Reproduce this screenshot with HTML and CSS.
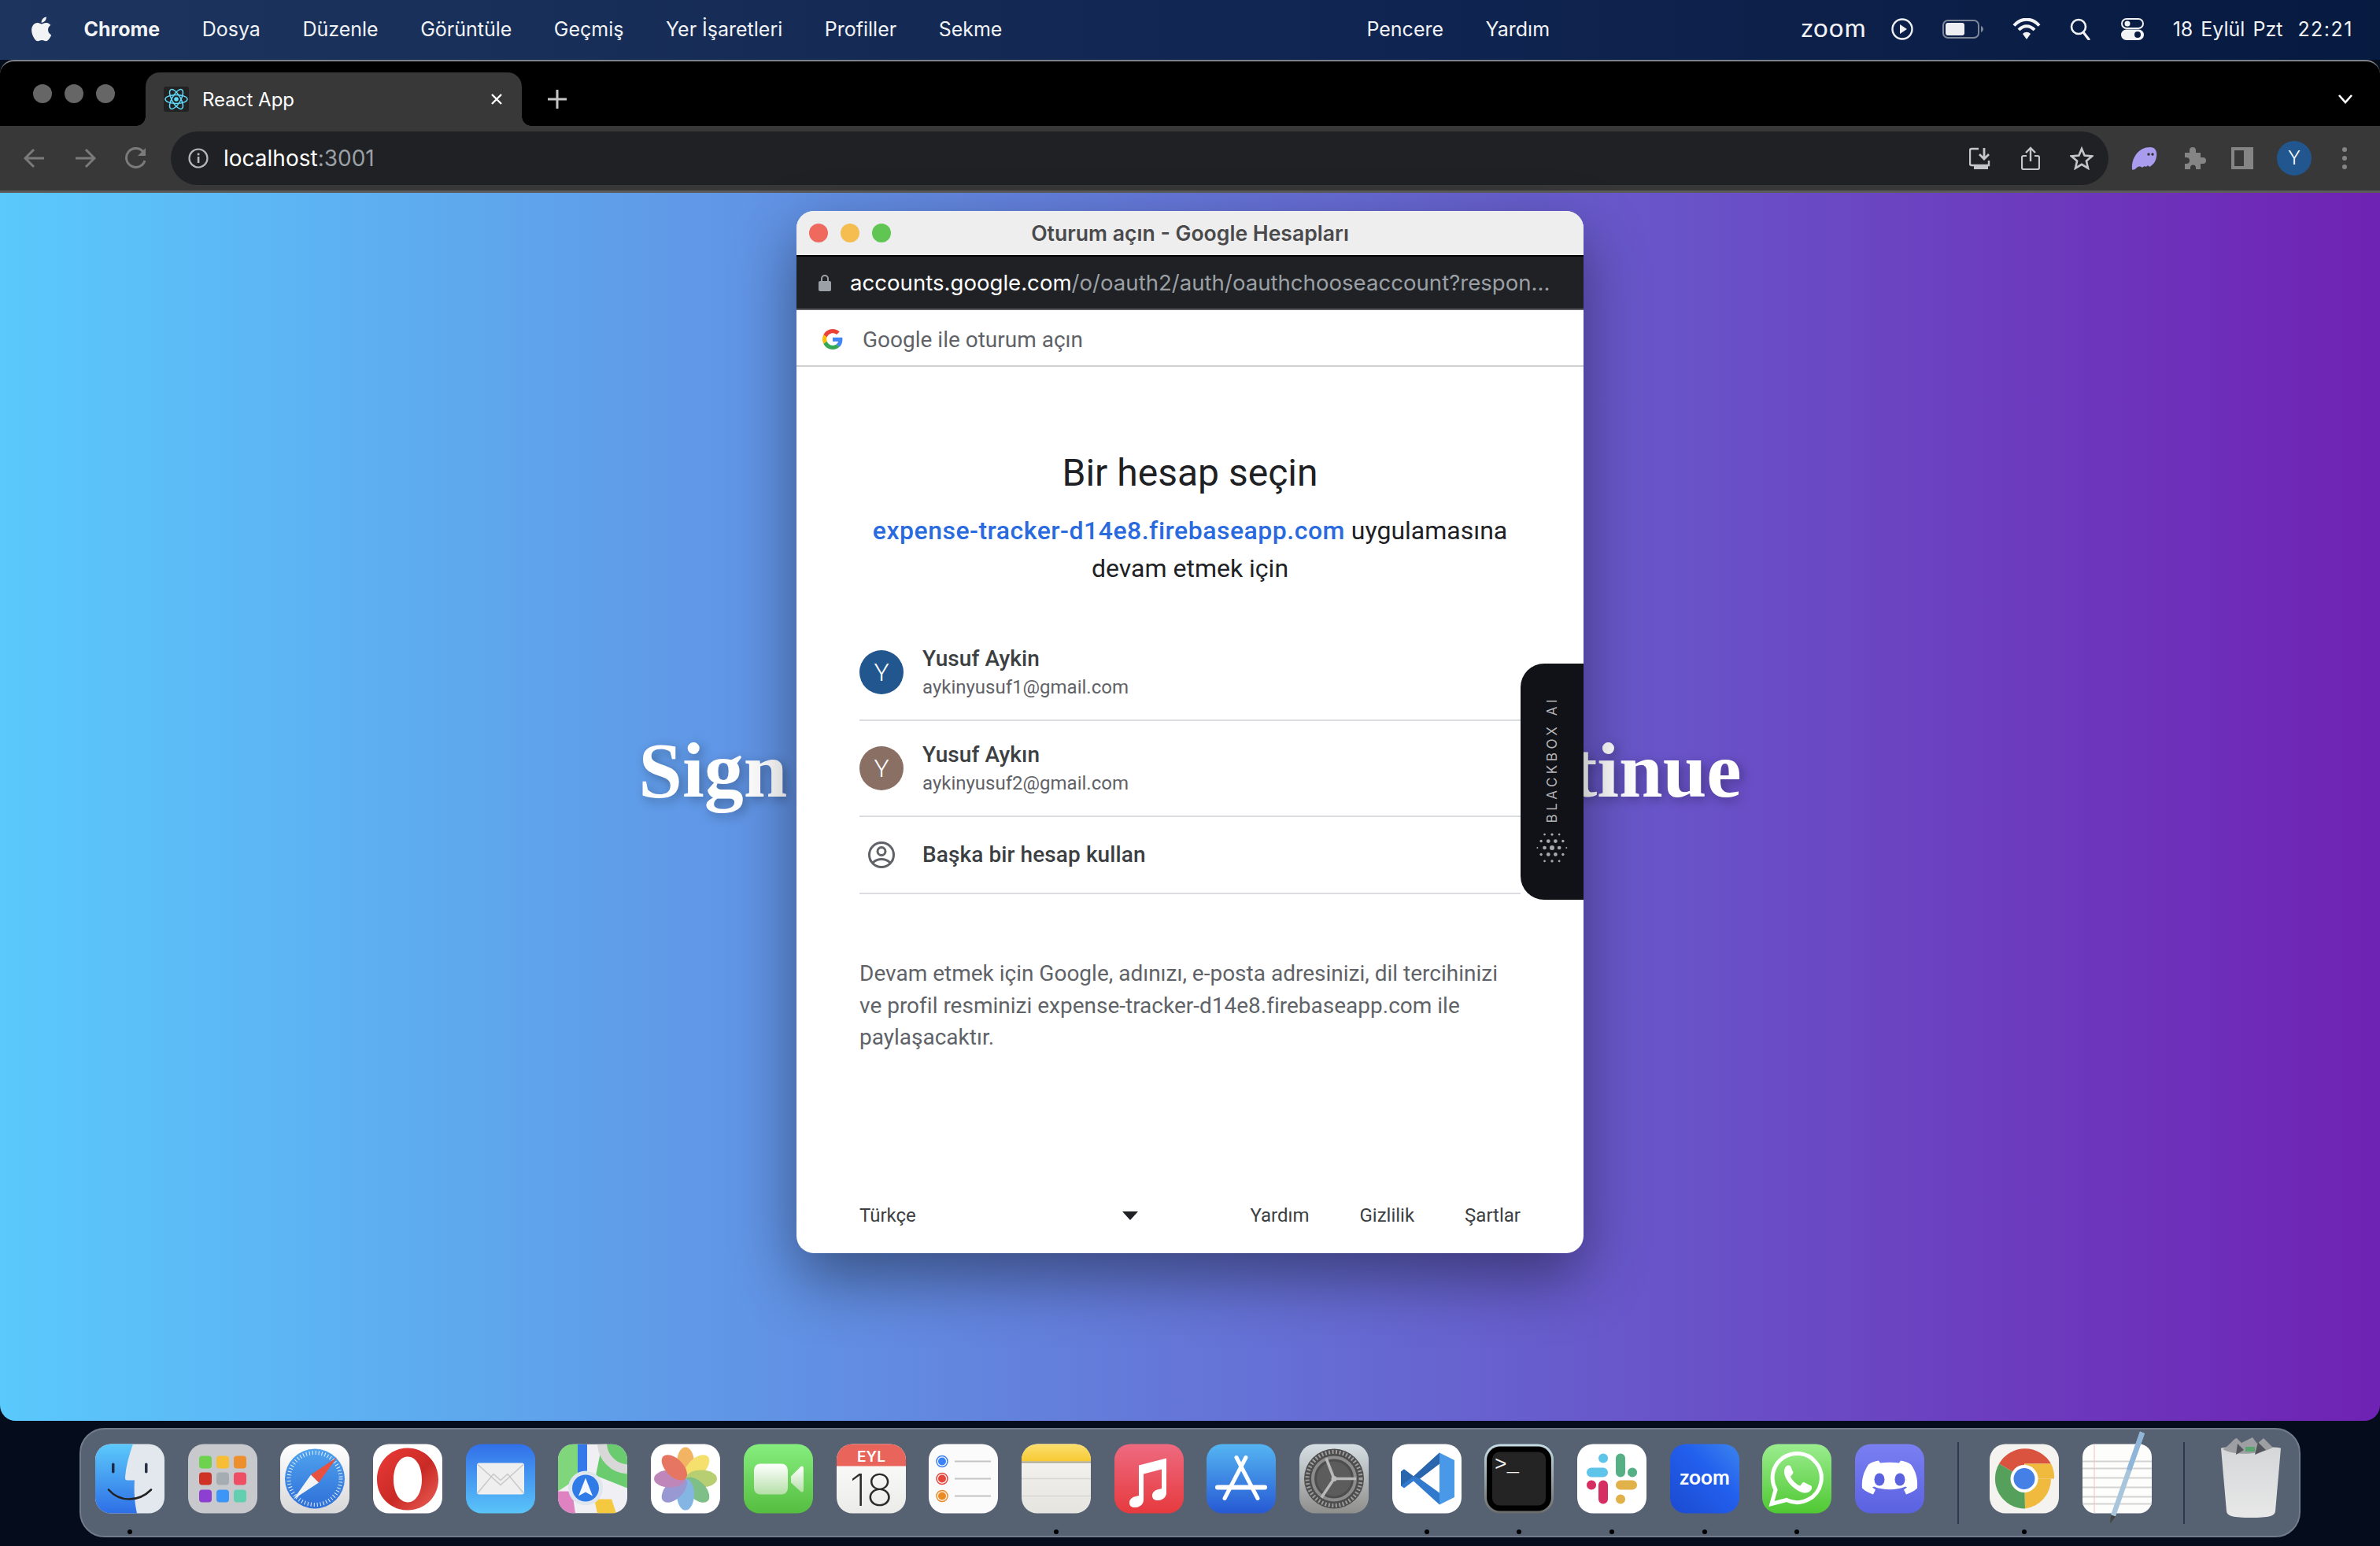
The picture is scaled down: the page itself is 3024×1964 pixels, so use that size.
FILE: index.html
```html
<!DOCTYPE html>
<html lang="tr">
<head>
<meta charset="UTF-8" />
<title>React App</title>
<link rel="stylesheet" href="styles.css">
</head>
<body>

<header class="menubar">
  <div class="menu-left">
    <svg class="apple" viewBox="3 1.5 18 21.5"><path fill="#f2f3f5" d="M17.05 12.54c-.03-2.6 2.12-3.85 2.22-3.91-1.21-1.77-3.09-2.01-3.76-2.04-1.6-.16-3.12.94-3.93.94-.81 0-2.06-.92-3.39-.89-1.74.03-3.35 1.01-4.25 2.57-1.81 3.14-.46 7.8 1.3 10.35.86 1.25 1.89 2.65 3.24 2.6 1.3-.05 1.79-.84 3.36-.84 1.57 0 2.01.84 3.39.82 1.4-.03 2.28-1.27 3.14-2.53.99-1.45 1.4-2.85 1.42-2.93-.03-.01-2.72-1.04-2.74-4.14zM14.47 4.9c.72-.87 1.2-2.08 1.07-3.28-1.03.04-2.28.69-3.02 1.55-.66.77-1.24 2-1.09 3.18 1.15.09 2.33-.59 3.04-1.45z"/></svg>
    <span class="menu-app">Chrome</span>
    <span>Dosya</span>
    <span>Düzenle</span>
    <span>Görüntüle</span>
    <span>Geçmiş</span>
    <span>Yer İşaretleri</span>
    <span>Profiller</span>
    <span>Sekme</span>
    <span class="notch"></span>
    <span>Pencere</span>
    <span>Yardım</span>
  </div>
  <div class="menu-right">
    <span class="menu-zoom">zoom</span>
    <svg class="st" width="28" height="28" viewBox="0 0 28 28"><circle cx="14" cy="14" r="12.5" fill="none" stroke="#eef0f3" stroke-width="2.4"/><path d="M11 8l9 6-9 6z" fill="#eef0f3"/></svg>
    <svg class="st" width="52" height="24" viewBox="0 0 52 24"><rect x="1" y="1" width="45" height="22" rx="6" fill="none" stroke="#7e8798" stroke-width="2"/><rect x="4" y="4" width="24" height="16" rx="3" fill="#eceef1"/><path d="M49 8c2 1 3 2.500 3 4s-1 3-3 4z" fill="#7e8798"/></svg>
    <svg class="st" width="36" height="28" viewBox="0 0 36 28"><path d="M2 9.500C11-1 25-1 34 9.500" fill="none" stroke="#f2f3f5" stroke-width="4"/><path d="M8 15c6-6.500 14-6.500 20 0" fill="none" stroke="#f2f3f5" stroke-width="4"/><path d="M13 20c3-3 7-3 10 0l-5 7z" fill="#f2f3f5"/></svg>
    <svg class="st st-search" width="26" height="28" viewBox="0 0 26 28"><circle cx="11" cy="11" r="9" fill="none" stroke="#f2f3f5" stroke-width="2.600"/><path d="M17 18l7 9" stroke="#f2f3f5" stroke-width="3.200" stroke-linecap="round"/></svg>
    <svg class="st" width="29" height="28" viewBox="0 0 29 28"><rect x="1" y="1" width="27" height="12" rx="6" fill="none" stroke="#f2f3f5" stroke-width="2"/><circle cx="8" cy="7" r="3.500" fill="#f2f3f5"/><rect y="14.500" width="29" height="13.500" rx="6.700" fill="#f2f3f5"/><circle cx="21" cy="21" r="4" fill="#0a1c40"/></svg>
    <span class="menu-date">18 Eylül Pzt</span>
    <span class="menu-time">22:21</span>
  </div>
</header>

<div class="browser">
  <div class="tabstrip">
    <div class="lights"><i></i><i></i><i></i></div>
    <div class="tab">
      <svg class="favicon" viewBox="0 0 32 32"><rect width="32" height="32" rx="3" fill="#222"/><g fill="none" stroke="#61dafb" stroke-width="1.500"><ellipse cx="16" cy="16" rx="14" ry="5.500"/><ellipse cx="16" cy="16" rx="14" ry="5.500" transform="rotate(60 16 16)"/><ellipse cx="16" cy="16" rx="14" ry="5.500" transform="rotate(120 16 16)"/></g><circle cx="16" cy="16" r="2.800" fill="#61dafb"/></svg>
      <span class="tab-title">React App</span>
      <svg class="tab-close" width="16" height="16" viewBox="0 0 16 16"><path d="M2 2l12 12M14 2L2 14" stroke="#fff" stroke-width="2.400"/></svg>
    </div>
    <svg class="newtab" width="26" height="26" viewBox="0 0 26 26"><path d="M13 1v24M1 13h24" stroke="#c6c6c6" stroke-width="3"/></svg>
    <svg class="tabmenu" width="20" height="12" viewBox="0 0 20 12"><path d="M2 1l8 9 8-9" fill="none" stroke="#fff" stroke-width="2.600"/></svg>
  </div>
  <div class="toolbar">
    <svg class="nav" width="28" height="26" viewBox="0 0 28 26"><path d="M26 13H3M13 2L2 13l11 11" fill="none" stroke="#7b7b7b" stroke-width="3"/></svg>
    <svg class="nav" width="28" height="26" viewBox="0 0 28 26"><path d="M2 13h23M15 2l11 11-11 11" fill="none" stroke="#7b7b7b" stroke-width="3"/></svg>
    <svg class="nav" width="30" height="28" viewBox="0 0 30 28"><path d="M26 17a12 12 0 1 1-2-11" fill="none" stroke="#7b7b7b" stroke-width="3"/><path d="M27 1v10H17z" fill="#7b7b7b"/></svg>
    <div class="omnibox">
      <svg width="26" height="26" viewBox="0 0 26 26"><circle cx="13" cy="13" r="11.500" fill="none" stroke="#b5b7ba" stroke-width="2.200"/><rect x="11.800" y="11" width="2.600" height="8" fill="#b5b7ba"/><rect x="11.800" y="6.500" width="2.600" height="2.800" fill="#b5b7ba"/></svg>
      <span class="omni-url">localhost<span class="dim">:3001</span></span>
      <div class="omni-actions">
        <svg width="28" height="28" viewBox="0 0 28 28"><path d="M12 2H3a2 2 0 0 0-2 2v17a2 2 0 0 0 2 2h22v-6" fill="none" stroke="#c4c6c8" stroke-width="2.400"/><path d="M19 1v13M13 9l6 6 6-6" fill="none" stroke="#c4c6c8" stroke-width="2.800"/><rect x="6" y="24" width="18" height="4" fill="#c4c6c8"/></svg>
        <svg width="24" height="30" viewBox="0 0 24 30"><path d="M7 12H3a2 2 0 0 0-2 2v13a2 2 0 0 0 2 2h18a2 2 0 0 0 2-2V14a2 2 0 0 0-2-2h-4" fill="none" stroke="#c4c6c8" stroke-width="2.200"/><path d="M12 19V2M6 8l6-6 6 6" fill="none" stroke="#c4c6c8" stroke-width="2.400"/></svg>
        <svg width="30" height="30" viewBox="0 0 30 30"><path d="M15 3l3.600 8.600 9.400.8-7.100 6.100 2.100 9.200-8-4.900-8 4.900 2.100-9.200L2 12.400l9.400-.8z" fill="none" stroke="#c4c6c8" stroke-width="2.600"/></svg>
      </div>
    </div>
    <div class="extensions">
      <svg width="33" height="30" viewBox="0 0 33 30"><path d="M1 29C0 16 8 1 24 1c7 0 9 6 8 12-1 7-5 11-9 13-1-2-3-2-4 0-2-1-3-1-5 1-2-2-5-2-7 0-2 2-5 4-6 2z" fill="#a99bee"/><circle cx="22" cy="10" r="1.700" fill="#333"/><circle cx="27" cy="10" r="1.700" fill="#333"/></svg>
      <svg width="30" height="30" viewBox="0 0 30 30"><path d="M3 8h6V5a4 4 0 0 1 8 0v3h6v6h3a4 4 0 0 1 0 8h-3v7h-6v-2a3.500 3.500 0 0 0-7 0v2H3v-7h2a4 4 0 0 0 0-8H3z" fill="#858585"/></svg>
      <svg width="28" height="28" viewBox="0 0 28 28"><path d="M0 0h28v28H0zM4 4v20h12V4z" fill="#858585" fill-rule="evenodd"/></svg>
      <span class="profile">Y</span>
      <svg width="8" height="30" viewBox="0 0 8 30"><circle cx="4" cy="4" r="3" fill="#858585"/><circle cx="4" cy="15" r="3" fill="#858585"/><circle cx="4" cy="26" r="3" fill="#858585"/></svg>
    </div>
  </div>
</div>

<main class="page">
  <h1 class="page-title">Sign in with Google to continue</h1>

  <section class="popup">
    <div class="popup-bar">
      <div class="popup-lights"><i class="red"></i><i class="yellow"></i><i class="green"></i></div>
      <span>Oturum açın - Google Hesapları</span>
    </div>
    <div class="popup-url">
      <svg width="16" height="21" viewBox="0 0 16 21"><path d="M4 9V5a4 4 0 0 1 8 0v4" fill="none" stroke="#9aa0a6" stroke-width="2"/><rect y="8" width="16" height="13" rx="2" fill="#9aa0a6"/></svg>
      <span>accounts.google.com<span class="dim">/o/oauth2/auth/oauthchooseaccount?respon...</span></span>
    </div>
    <div class="signin-head">
      <svg width="26" height="26" viewBox="0 0 48 48"><path fill="#EA4335" d="M24 9.500c3.540 0 6.710 1.220 9.210 3.600l6.850-6.850C35.900 2.380 30.470 0 24 0 14.620 0 6.510 5.380 2.560 13.220l7.980 6.190C12.430 13.720 17.740 9.500 24 9.500z"/><path fill="#4285F4" d="M46.980 24.550c0-1.570-.15-3.090-.38-4.550H24v9.020h12.940c-.58 2.960-2.260 5.480-4.780 7.180l7.730 6c4.510-4.180 7.090-10.360 7.090-17.650z"/><path fill="#FBBC05" d="M10.530 28.590c-.48-1.450-.76-2.990-.76-4.590s.27-3.140.76-4.590l-7.980-6.190C.92 16.460 0 20.120 0 24c0 3.880.92 7.540 2.560 10.780l7.970-6.190z"/><path fill="#34A853" d="M24 48c6.480 0 11.930-2.130 15.890-5.810l-7.730-6c-2.150 1.450-4.920 2.300-8.160 2.300-6.260 0-11.570-4.220-13.470-9.910l-7.980 6.190C6.510 42.620 14.620 48 24 48z"/></svg>
      <span>Google ile oturum açın</span>
    </div>
    <div class="signin-body">
      <h2>Bir hesap seçin</h2>
      <p class="signin-sub"><a>expense-tracker-d14e8.firebaseapp.com</a> uygulamasına<br>devam etmek için</p>
      <ul class="accounts">
        <li class="account">
          <span class="avatar blue">Y</span>
          <div class="acc-text"><div class="acc-name">Yusuf Aykin</div><div class="acc-mail">aykinyusuf1@gmail.com</div></div>
        </li>
        <li class="account">
          <span class="avatar brown">Y</span>
          <div class="acc-text"><div class="acc-name">Yusuf Aykın</div><div class="acc-mail">aykinyusuf2@gmail.com</div></div>
        </li>
        <li class="account other">
          <svg class="other-icon" width="36" height="36" viewBox="0 0 36 36"><circle cx="18" cy="18" r="15.500" fill="none" stroke="#5f6368" stroke-width="3"/><circle cx="18" cy="13.500" r="5" fill="none" stroke="#5f6368" stroke-width="3"/><path d="M7 28c6-6 16-6 22 0" fill="none" stroke="#5f6368" stroke-width="3"/></svg>
          <div class="acc-name">Başka bir hesap kullan</div>
        </li>
      </ul>
      <p class="signin-note">Devam etmek için Google, adınızı, e-posta adresinizi, dil tercihinizi<br>ve profil resminizi expense-tracker-d14e8.firebaseapp.com ile<br>paylaşacaktır.</p>
      <footer class="signin-foot">
        <div class="lang"><span>Türkçe</span><i class="caret"></i></div>
        <div class="foot-links"><span>Yardım</span><span>Gizlilik</span><span>Şartlar</span></div>
      </footer>
    </div>

    <aside class="blackbox">
      <span class="blackbox-label">BLACKBOX AI</span>
      <svg width="44" height="44" viewBox="0 0 130 130" fill="#a9a9ad">
        <circle cx="37" cy="15" r="4"/><circle cx="65" cy="15" r="5"/><circle cx="92" cy="15" r="4"/>
        <circle cx="24" cy="40" r="5"/><circle cx="51" cy="40" r="7"/><circle cx="78" cy="40" r="7"/><circle cx="106" cy="40" r="5"/>
        <circle cx="10" cy="65" r="3"/><circle cx="37" cy="65" r="7"/><circle cx="65" cy="65" r="9"/><circle cx="92" cy="65" r="7"/><circle cx="119" cy="65" r="3"/>
        <circle cx="24" cy="90" r="5"/><circle cx="51" cy="90" r="7"/><circle cx="78" cy="90" r="7"/><circle cx="106" cy="90" r="5"/>
        <circle cx="37" cy="115" r="4"/><circle cx="65" cy="115" r="5"/><circle cx="92" cy="115" r="4"/>
      </svg>
    </aside>
  </section>
</main>

<nav class="dock">
  <div class="app on"><svg viewBox="0 0 88 88"><defs><linearGradient id="fi" x1="0" y1="0" x2="0" y2="1"><stop offset="0" stop-color="#5cc9fb"/><stop offset="1" stop-color="#2e6fe6"/></linearGradient></defs><rect width="88" height="88" rx="20" fill="#e3e7ee"/><path d="M20 0h28c-5 14-9 28-10 42-.3 3 .8 4 3 4h9c-1 14 0 29 3 42H20A20 20 0 0 1 0 68V20A20 20 0 0 1 20 0z" fill="url(#fi)"/><rect x="21" y="24" width="3.500" height="13" rx="1.700" fill="#1c2b4a"/><rect x="63" y="24" width="3.500" height="13" rx="1.700" fill="#2a3346"/><path d="M17 58c14 16 38 16 54 0" fill="none" stroke="#222" stroke-width="2.600" stroke-linecap="round"/></svg></div>
  <div class="app"><svg viewBox="0 0 88 88"><rect width="88" height="88" rx="20" fill="#c7c9cd"/><g><rect x="14" y="15" width="16" height="16" rx="4" fill="#6fd24f"/><rect x="36" y="15" width="16" height="16" rx="4" fill="#f7bd35"/><rect x="58" y="15" width="16" height="16" rx="4" fill="#ee8f2d"/><rect x="14" y="36" width="16" height="16" rx="4" fill="#cf3325"/><rect x="36" y="36" width="16" height="16" rx="4" fill="#a5adb2"/><rect x="58" y="36" width="16" height="16" rx="4" fill="#ee4f64"/><rect x="14" y="58" width="16" height="16" rx="4" fill="#8c3fd0"/><rect x="36" y="58" width="16" height="16" rx="4" fill="#3d95f7"/><rect x="58" y="58" width="16" height="16" rx="4" fill="#63cfb0"/></g></svg></div>
  <div class="app"><svg viewBox="0 0 88 88"><defs><linearGradient id="sa" x1="0" y1="0" x2="0" y2="1"><stop offset="0" stop-color="#4fa3ee"/><stop offset="1" stop-color="#2f6fd8"/></linearGradient><linearGradient id="sb" x1="0" y1="0" x2="0" y2="1"><stop offset="0" stop-color="#fff"/><stop offset="1" stop-color="#d8d8d8"/></linearGradient></defs><rect width="88" height="88" rx="20" fill="url(#sb)"/><circle cx="44" cy="44" r="38" fill="url(#sa)"/><circle cx="44" cy="44" r="33" fill="none" stroke="#e6f0fb" stroke-width="5" stroke-dasharray="1 3"/><path d="M72 17L39 39l10 10z" fill="#e8503f"/><path d="M17 70l22-31 10 10z" fill="#f4f4f4"/></svg></div>
  <div class="app"><svg viewBox="0 0 88 88"><defs><linearGradient id="op" x1="0" y1="0" x2="1" y2="1"><stop offset="0" stop-color="#ec3b39"/><stop offset=".55" stop-color="#c92a25"/><stop offset="1" stop-color="#ec6259"/></linearGradient></defs><rect width="88" height="88" rx="20" fill="#fff"/><path d="M44 5c21 0 39 17 39 40S65 84 44 84 5 68 5 45 23 5 44 5zm0 11c-11 0-18 13-18 29s7 29 18 29 18-13 18-29-7-29-18-29z" fill="url(#op)" fill-rule="evenodd"/></svg></div>
  <div class="app"><svg viewBox="0 0 88 88"><defs><linearGradient id="ma" x1="0" y1="0" x2="0" y2="1"><stop offset="0" stop-color="#3270ea"/><stop offset="1" stop-color="#5ac4f8"/></linearGradient></defs><rect width="88" height="88" rx="20" fill="url(#ma)"/><rect x="14" y="24" width="60" height="40" rx="3" fill="#efefef"/><path d="M15 62l20-24 9 8 9-8 20 24M15 26l29 26 29-26" fill="none" stroke="#c8c8c8" stroke-width="1.500"/></svg></div>
  <div class="app"><svg viewBox="0 0 88 88"><defs><clipPath id="mc"><rect width="88" height="88" rx="20"/></clipPath></defs><g clip-path="url(#mc)"><rect width="88" height="88" fill="#f0f0f4"/><path d="M0 0h30v40L0 60z" fill="#7fd67b"/><path d="M56 0h32v56L48 40z" fill="#6acb6f"/><path d="M0 60l18 0 4 28H0z" fill="#df82c2"/><path d="M46 70h22l6 18H50z" fill="#f5c93f"/><rect x="25" y="0" width="12" height="40" fill="#3478ea"/><path d="M56 0a34 34 0 0 0 32 32" fill="none" stroke="#d8d8d8" stroke-width="12"/></g><circle cx="35" cy="56" r="22" fill="#dfe6ee"/><circle cx="35" cy="56" r="17" fill="#2f7be8"/><path d="M35 43l9 23-9-5-9 5z" fill="#f4f8ff"/></svg></div>
  <div class="app"><svg viewBox="0 0 88 88"><rect width="88" height="88" rx="20" fill="#fff"/><g opacity=".8"><ellipse cx="44" cy="24" rx="11" ry="20" fill="#f0a13c"/><ellipse cx="44" cy="24" rx="11" ry="20" fill="#f3d94a" transform="rotate(45 44 44)"/><ellipse cx="44" cy="24" rx="11" ry="20" fill="#a6c34f" transform="rotate(90 44 44)"/><ellipse cx="44" cy="24" rx="11" ry="20" fill="#5fae6a" transform="rotate(135 44 44)"/><ellipse cx="44" cy="24" rx="11" ry="20" fill="#65a5dd" transform="rotate(180 44 44)"/><ellipse cx="44" cy="24" rx="11" ry="20" fill="#7f7fc9" transform="rotate(225 44 44)"/><ellipse cx="44" cy="24" rx="11" ry="20" fill="#b06aa8" transform="rotate(270 44 44)"/><ellipse cx="44" cy="24" rx="11" ry="20" fill="#e0533a" transform="rotate(315 44 44)"/></g></svg></div>
  <div class="app"><svg viewBox="0 0 88 88"><defs><linearGradient id="ft" x1="0" y1="0" x2="0" y2="1"><stop offset="0" stop-color="#86ee7e"/><stop offset="1" stop-color="#55bd3f"/></linearGradient><linearGradient id="fw" x1="0" y1="0" x2="0" y2="1"><stop offset="0" stop-color="#fff"/><stop offset="1" stop-color="#b5dfa8"/></linearGradient></defs><rect width="88" height="88" rx="20" fill="url(#ft)"/><rect x="13" y="25" width="43" height="39" rx="8" fill="url(#fw)"/><path d="M60 41l12-12c2-2 4-1 4 2v27c0 3-2 4-4 2L60 49z" fill="url(#fw)"/></svg></div>
  <div class="app"><svg viewBox="0 0 88 88"><defs><linearGradient id="cal" x1="0" y1="0" x2="0" y2="1"><stop offset="0" stop-color="#fff"/><stop offset="1" stop-color="#ebebe8"/></linearGradient></defs><rect width="88" height="88" rx="20" fill="url(#cal)"/><path d="M20 0h48a20 20 0 0 1 20 20v8H0v-8A20 20 0 0 1 20 0z" fill="#e9655c"/><text class="cal-month" x="44" y="22" text-anchor="middle">EYL</text><text class="cal-day" x="44" y="78" text-anchor="middle">18</text></svg></div>
  <div class="app"><svg viewBox="0 0 88 88"><rect width="88" height="88" rx="20" fill="#fbfbfb"/><g fill="none" stroke-width="1.500"><circle cx="17" cy="22" r="7" stroke="#3b82f6"/><circle cx="17" cy="44" r="7" stroke="#e6473c"/><circle cx="17" cy="66" r="7" stroke="#e98a25"/></g><circle cx="17" cy="22" r="5" fill="#3b82f6"/><circle cx="17" cy="44" r="5" fill="#e6473c"/><circle cx="17" cy="66" r="5" fill="#e98a25"/><path d="M33 22h46M33 44h46M33 66h46" stroke="#c4c4c4" stroke-width="2"/></svg></div>
  <div class="app on"><svg viewBox="0 0 88 88"><defs><linearGradient id="no" x1="0" y1="0" x2="0" y2="1"><stop offset="0" stop-color="#f6f5f2"/><stop offset="1" stop-color="#e5e4df"/></linearGradient><linearGradient id="ny" x1="0" y1="0" x2="0" y2="1"><stop offset="0" stop-color="#fbdf6f"/><stop offset="1" stop-color="#f7c933"/></linearGradient></defs><rect width="88" height="88" rx="20" fill="url(#no)"/><path d="M20 0h48a20 20 0 0 1 20 20v2H0v-2A20 20 0 0 1 20 0z" fill="url(#ny)"/><rect y="22" width="88" height="2" fill="#a9a48e"/><path d="M0 44h88M0 66h88" stroke="#d8d7d2" stroke-width="1.500"/></svg></div>
  <div class="app"><svg viewBox="0 0 88 88"><defs><linearGradient id="mu" x1="0" y1="0" x2="0" y2="1"><stop offset="0" stop-color="#ee6a80"/><stop offset="1" stop-color="#e63a3e"/></linearGradient></defs><rect width="88" height="88" rx="20" fill="url(#mu)"/><path d="M31 27l35-9v44c0 5-4 9-10 9.500-5 .5-8-2-8-6s3-7 8-8l4-1V32l-23 6v33c0 5-4 9-10 9.500-5 .5-8-2-8-6s3-7 8-8l4-1z" fill="#fff"/></svg></div>
  <div class="app"><svg viewBox="0 0 88 88"><defs><linearGradient id="as" x1="0" y1="0" x2="0" y2="1"><stop offset="0" stop-color="#55b5f2"/><stop offset="1" stop-color="#2659d4"/></linearGradient></defs><rect width="88" height="88" rx="20" fill="url(#as)"/><g stroke="#fff" stroke-linecap="round" fill="none"><path d="M50 17L23 69" stroke-width="5"/><path d="M38 17l27 52" stroke-width="5"/><path d="M14 55h60" stroke-width="6"/></g></svg></div>
  <div class="app"><svg viewBox="0 0 88 88"><defs><linearGradient id="sp" x1="0" y1="0" x2="0" y2="1"><stop offset="0" stop-color="#d6dfe4"/><stop offset="1" stop-color="#8f8f8c"/></linearGradient></defs><rect width="88" height="88" rx="20" fill="url(#sp)"/><circle cx="44" cy="44" r="38" fill="#4d4d4d"/><circle cx="44" cy="44" r="34" fill="none" stroke="#9d9d9d" stroke-width="5" stroke-dasharray="2 2.500"/><circle cx="44" cy="44" r="27" fill="none" stroke="#8c8c8c" stroke-width="4"/><circle cx="44" cy="44" r="22" fill="#5c5c5c"/><path d="M44 44L34 18M44 44l28 0M44 44L28 68" stroke="#b9b9b9" stroke-width="3.500"/><circle cx="44" cy="44" r="3.500" fill="#bcbcbc"/></svg></div>
  <div class="app on"><svg viewBox="0 0 88 88"><rect width="88" height="88" rx="20" fill="#fff"/><path d="M60 11l19 9.500v47L60 77z" fill="#4a98e8"/><path d="M60 11L27 41l-12-9-4 3v18l4 3 12-9 33 30V62L35 44l25-19z" fill="#327ace"/><path d="M60 11L27 41l8 3 25-19z" fill="#2a66ad"/><path d="M11 35l4-3 12 9-16 12z" fill="#2a66ad"/></svg></div>
  <div class="app on"><svg viewBox="0 0 88 88"><defs><linearGradient id="te" x1="0" y1="0" x2="0" y2="1"><stop offset="0" stop-color="#c5dde5"/><stop offset="1" stop-color="#6c6c6c"/></linearGradient></defs><rect width="88" height="88" rx="20" fill="url(#te)"/><rect x="3" y="3" width="82" height="82" rx="17" fill="#000"/><rect x="10" y="10" width="68" height="68" rx="9" fill="#242424"/><text class="term" x="13" y="33">&gt;_</text></svg></div>
  <div class="app on"><svg viewBox="0 0 88 88"><rect width="88" height="88" rx="20" fill="#fff"/><g stroke-linecap="round" stroke-width="12" fill="none"><path d="M33 18h.1M33 36H18" stroke="#5ec4ea"/><path d="M55 18v18M70 36h.1" stroke="#55b086"/><path d="M55 52h15M55 70h.1" stroke="#e1b14a"/><path d="M33 52v18M18 52h.1" stroke="#d62e63"/></g></svg></div>
  <div class="app on"><svg viewBox="0 0 88 88"><defs><linearGradient id="zo" x1="1" y1="0" x2="0" y2="1"><stop offset="0" stop-color="#3c84ee"/><stop offset=".4" stop-color="#2260ee"/><stop offset="1" stop-color="#1c4ad0"/></linearGradient></defs><rect width="88" height="88" rx="20" fill="url(#zo)"/><text class="zoom-app" x="44" y="51" text-anchor="middle">zoom</text></svg></div>
  <div class="app on"><svg viewBox="0 0 88 88"><defs><linearGradient id="wa" x1="0" y1="0" x2="0" y2="1"><stop offset="0" stop-color="#9bed8f"/><stop offset="1" stop-color="#4fc832"/></linearGradient></defs><rect width="88" height="88" rx="20" fill="url(#wa)"/><path d="M44 12a31 31 0 0 0-27 46l-5 18 19-5a31 31 0 1 0 13-59z" fill="none" stroke="#fff" stroke-width="5"/><path d="M33 27c-2 0-5 3-5 8 0 12 16 27 27 27 5 0 8-4 8-6 0-1 0-3-1-3l-8-4c-2-1-3 0-4 2l-2 2c-4-1-11-8-12-12l2-2c1-1 2-3 1-4l-3-7c-1-1-2-1-3-1z" fill="#fff"/></svg></div>
  <div class="app"><svg viewBox="0 0 88 88"><defs><linearGradient id="di" x1="0" y1="0" x2="0" y2="1"><stop offset="0" stop-color="#7a7ff2"/><stop offset="1" stop-color="#5b62e0"/></linearGradient></defs><rect width="88" height="88" rx="20" fill="url(#di)"/><path d="M30 21c-5 1-9 2-13 5-6 9-9 19-8 30 4 4 9 6 14 8l3-6-4-3 2-1c12 5 28 5 40 0l2 1-4 3 3 6c5-2 10-4 14-8 1-12-2-22-8-30-4-3-8-4-13-5l-2 3c-8-1-16-1-24 0z" fill="#fff"/><ellipse cx="31" cy="45" rx="6.500" ry="8" fill="#5b62e0"/><ellipse cx="57" cy="45" rx="6.500" ry="8" fill="#5b62e0"/></svg></div>
  <div class="dock-sep first"></div>
  <div class="app on after-sep"><svg viewBox="0 0 88 88"><rect width="88" height="88" rx="20" fill="#f4f3f0"/><path d="M44 44L12 25A38 38 0 0 1 78 25H44z" fill="#d9533e"/><path d="M44 44h34a38 38 0 0 1-33 38z" fill="#f0ba3e"/><path d="M44 44l1 38A38 38 0 0 1 12 25z" fill="#55a05a"/><path d="M44 25h34a38 38 0 0 1 4 19H62z" fill="#f0ba3e"/><circle cx="44" cy="44" r="17.500" fill="#fff"/><circle cx="44" cy="44" r="13.500" fill="#4580e6"/></svg></div>
  <div class="app"><svg viewBox="0 0 88 88"><rect width="88" height="88" rx="16" fill="#fdfdfb"/><path d="M0 22h88M0 31h88M0 43h88M0 55h88M0 67h88M0 76h88" stroke="#d3d3d3" stroke-width="1.800"/><path d="M15 0v88" stroke="#f2c2c2" stroke-width="1"/><path d="M36 90L73-16l6 2.500L42 92z" fill="#a9c5dc"/><path d="M56 32L73-16l6 2.500L62 34z" fill="#8fb6d8"/><path d="M36 90l6 2-7 9z" fill="#444"/></svg></div>
  <div class="dock-sep"></div>
  <div class="trash"><svg width="80" height="102" viewBox="0 0 78 102"><defs><linearGradient id="tr" x1="0" y1="0" x2="0" y2="1"><stop offset="0" stop-color="#d4d6d8"/><stop offset="1" stop-color="#e8e8e8"/></linearGradient></defs><path d="M1 14c0-3 76-3 76 0l-7 80c-1 6-8 8-31 8s-30-2-31-8z" fill="url(#tr)"/><path d="M3 15c10-5 14-14 18-14l6 6 14-7 6 8 8-7 12 12c-20 10-50 10-64 2z" fill="#9d9fa2"/><path d="M22 8l8 8-10 6zM48 6l10 10-14 6z" fill="#51545a"/><rect x="32" y="12" width="12" height="6" fill="#58a56f"/></svg></div>
</nav>

</body>
</html>
```

FILE: styles.css
```css
* {
  box-sizing: border-box;
}

html, body {
  margin: 0;
  width: 3024px;
  height: 1964px;
  overflow: hidden;
}

body {
  display: flex;
  flex-direction: column;
  background: #050d1c;
  font-family: Inter, "Noto Sans", sans-serif;
}

/* macOS menu bar */
.menubar {
  height: 76px;
  flex: none;
  display: flex;
  align-items: center;
  justify-content: space-between;
  padding: 0 34px 2px 40px;
  background: linear-gradient(90deg, #1d355e, #0f2450 60%, #071a40);
  color: #f2f3f5;
  font-size: 25px;
}

.menu-left {
  display: flex;
  align-items: center;
  gap: 53.500px;
}

.apple {
  width: 27px;
  height: 33px;
  margin-right: -14px;
}

.menu-app {
  font-weight: 700;
}

.notch {
  width: 356px;
}

.menu-right {
  display: flex;
  align-items: center;
  gap: 37px;
}

.st-search {
  margin-right: 2px;
}

.menu-zoom {
  font-family: Lato, sans-serif;
  font-size: 33px;
  font-weight: 400;
  letter-spacing: 1px;
  line-height: 30px;
  margin: 0 -6px 6px 0;
}

.menu-date {
  word-spacing: 3px;
}

.menu-time {
  margin-left: -18px;
  letter-spacing: 1.500px;
}

/* browser chrome */
.browser {
  flex: none;
}

.tabstrip {
  height: 84px;
  display: flex;
  align-items: flex-end;
  background: #000;
  border-top: 2px solid #7d8188;
  border-radius: 18px 18px 0 0;
  padding-right: 34px;
}

.lights {
  width: 185px;
  height: 66px;
  flex: none;
  display: flex;
  gap: 16px;
  padding: 13px 0 0 42px;
}

.lights i {
  width: 24px;
  height: 24px;
  border-radius: 50%;
  background: #666;
}

.tab {
  position: relative;
  width: 478px;
  height: 68px;
  display: flex;
  align-items: center;
  padding: 0 24px 0 23px;
  background: #383838;
  border-radius: 18px 18px 0 0;
  color: #fff;
  font-size: 24px;
}

.tab::before,
.tab::after {
  content: "";
  position: absolute;
  bottom: 0;
  width: 12px;
  height: 12px;
}

.tab::before {
  left: -12px;
  background: radial-gradient(circle at 0 0, #000 11.500px, #383838 12px);
}

.tab::after {
  right: -12px;
  background: radial-gradient(circle at 100% 0, #000 11.500px, #383838 12px);
}

.favicon {
  width: 32px;
  height: 32px;
  margin-right: 17px;
}

.tab-title {
  flex: 1;
}

.newtab {
  margin: 0 0 21px 32px;
}

.tabmenu {
  margin: 0 0 28px auto;
}

.toolbar {
  height: 85px;
  display: flex;
  align-items: center;
  padding: 0 30px 0 30px;
  background: #383838;
  border-bottom: 3px solid #5b5b5b;
}

.nav {
  flex: none;
  margin-right: 36px;
}

.omnibox {
  width: 2462px;
  height: 68px;
  margin-left: -7px;
  flex: none;
  display: flex;
  align-items: center;
  gap: 19px;
  padding: 0 19px 0 22px;
  background: #202124;
  border-radius: 34px;
}

.omni-url {
  color: #fff;
  font-size: 28px;
}

.dim {
  color: #9aa0a6;
}

.omni-actions {
  margin-left: auto;
  display: flex;
  align-items: center;
  gap: 38px;
}

.extensions {
  margin-left: 29px;
  display: flex;
  align-items: center;
  gap: 32px;
}

.profile {
  width: 44px;
  height: 44px;
  border-radius: 50%;
  background: #21568f;
  color: #fff;
  font-size: 24px;
  font-weight: 300;
  text-align: center;
  line-height: 44px;
  margin: 0 6px 0 -2px;
}

/* page behind the popup */
.page {
  position: relative;
  flex: none;
  height: 1560px;
  display: flex;
  align-items: center;
  justify-content: center;
  padding-bottom: 94px;
  background: linear-gradient(90deg, #5ac9fc, #6f22b3);
  border-radius: 0 0 20px 20px;
}

.page-title {
  margin: 0;
  color: #fff;
  font-family: "Liberation Serif", serif;
  font-size: 100px;
  font-weight: 700;
  word-spacing: 13px;
  white-space: nowrap;
  text-shadow: 4px 4px 14px rgba(0, 0, 0, 0.3);
}

/* sign-in popup window */
.popup {
  position: absolute;
  left: 1012px;
  top: 23px;
  width: 1000px;
  height: 1324px;
  display: flex;
  flex-direction: column;
  background: #fff;
  border-radius: 22px;
  overflow: hidden;
  box-shadow: 0 32px 80px rgba(0, 0, 0, 0.42);
  font-family: Roboto, sans-serif;
}

.popup-bar {
  position: relative;
  height: 56px;
  flex: none;
  display: flex;
  align-items: center;
  justify-content: center;
  background: #eeeeef;
  color: #4a4a4c;
  font-family: Inter, sans-serif;
  font-size: 26.600px;
  font-weight: 600;
}

.popup-lights {
  position: absolute;
  left: 16px;
  top: 16px;
  display: flex;
  gap: 16px;
}

.popup-lights i {
  width: 24px;
  height: 24px;
  border-radius: 50%;
}

.red { background: #ee6a5f; }
.yellow { background: #f5bd4f; }
.green { background: #61c554; }

.popup-url {
  height: 70px;
  flex: none;
  display: flex;
  align-items: center;
  gap: 24px;
  padding-left: 28px;
  background: #202124;
  border-top: 2px solid #000;
  border-bottom: 2px solid #5f6063;
  color: #fff;
  font-family: Inter, sans-serif;
  font-size: 27.600px;
}

.signin-head {
  height: 72px;
  flex: none;
  display: flex;
  align-items: center;
  gap: 25px;
  padding: 4px 0 0 33px;
  border-bottom: 2px solid #d0d0d0;
  color: #5f6368;
  font-size: 28px;
}

.signin-body {
  flex: 1;
  display: flex;
  flex-direction: column;
  padding: 103px 80px 32px;
}

.signin-body h2 {
  margin: 0;
  color: #202124;
  font-size: 48px;
  font-weight: 400;
  line-height: 64px;
  text-align: center;
}

.signin-sub {
  margin: 17px -40px 0;
  color: #202124;
  font-size: 32px;
  line-height: 48px;
  text-align: center;
}

.signin-sub a {
  color: #2a6adf;
  font-weight: 500;
  letter-spacing: 0.500px;
}

.accounts {
  list-style: none;
  margin: 48px 0 0;
  padding: 0;
}

.account {
  height: 122px;
  display: flex;
  align-items: center;
  gap: 24px;
  border-bottom: 2px solid #dadce0;
}

.account.other {
  height: 98px;
}

.acc-text {
  padding-top: 2px;
}

.other-icon {
  width: 56px;
  flex: none;
}

.avatar {
  width: 56px;
  height: 56px;
  flex: none;
  border-radius: 50%;
  color: #fff;
  font-size: 32px;
  font-weight: 300;
  line-height: 56px;
  text-align: center;
}

.avatar.blue { background: #21568f; }
.avatar.brown { background: #8a7064; }

.acc-name {
  color: #3c4043;
  font-size: 28px;
  font-weight: 500;
  letter-spacing: 0.100px;
  line-height: 36px;
}

.acc-mail {
  color: #5f6368;
  font-size: 24px;
  line-height: 36px;
}

.signin-note {
  margin: 81px 0 0;
  color: #5f6368;
  font-size: 28px;
  line-height: 40.500px;
}

.signin-foot {
  margin-top: auto;
  height: 34px;
  display: flex;
  align-items: center;
  justify-content: space-between;
  padding-top: 2px;
  color: #3c4043;
  font-size: 24px;
}

.lang {
  width: 354px;
  display: flex;
  align-items: center;
  justify-content: space-between;
}

.caret {
  width: 0;
  height: 0;
  border-left: 10px solid transparent;
  border-right: 10px solid transparent;
  border-top: 11px solid #202124;
}

.foot-links {
  display: flex;
  gap: 64px;
}

.blackbox {
  position: absolute;
  right: 0;
  top: 575px;
  width: 80px;
  height: 300px;
  display: flex;
  flex-direction: column;
  align-items: center;
  justify-content: flex-end;
  gap: 10px;
  padding-bottom: 44px;
  background: #111218;
  border-radius: 30px 0 0 30px;
}

.blackbox-label {
  writing-mode: vertical-rl;
  transform: rotate(180deg);
  color: #b5b5b8;
  font-family: Inter, sans-serif;
  font-size: 17px;
  letter-spacing: 4.500px;
  white-space: nowrap;
}

/* dock */
.dock {
  width: 2822px;
  height: 139px;
  margin: 9px 0 0 101px;
  display: flex;
  align-items: flex-start;
  gap: 29.700px;
  padding: 18px 0 0 18px;
  background: #566172;
  border: 2px solid #707b8b;
  border-radius: 32px;
}

.app {
  width: 88px;
  flex: none;
  display: flex;
  flex-direction: column;
  align-items: center;
}

.app svg {
  display: block;
  width: 88px;
  height: 89px;
  overflow: visible;
}

.app::after {
  content: "";
  width: 6px;
  height: 6px;
  margin-top: 20px;
  border-radius: 50%;
}

.app.on::after {
  background: #000;
}

.dock-sep {
  width: 2px;
  height: 104px;
  margin: -2px 0 0 10px;
  flex: none;
  background: #2d3a4d;
}

.dock-sep.first {
  margin-left: 12px;
}

.after-sep {
  margin-left: 10px;
}

.trash {
  margin: -8px 0 0 14px;
}

.cal-month {
  fill: #fff;
  font-family: Inter, sans-serif;
  font-size: 19px;
  font-weight: 600;
}

.cal-day {
  fill: #2b2b2b;
  font-family: Inter, sans-serif;
  font-size: 56px;
  font-weight: 200;
}

.term {
  fill: #f2f2f2;
  font-family: "Liberation Mono", monospace;
  font-size: 26px;
}

.zoom-app {
  fill: #fff;
  font-family: Lato, sans-serif;
  font-size: 26px;
  font-weight: 700;
}
```
